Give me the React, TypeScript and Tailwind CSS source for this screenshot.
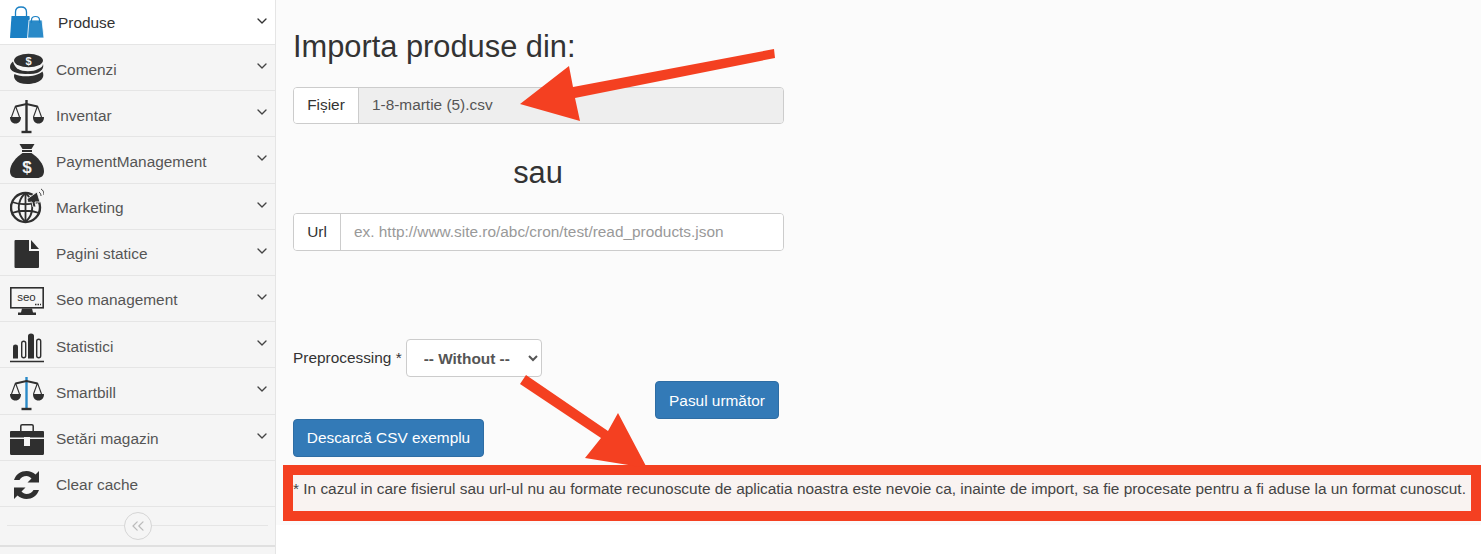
import React from 'react';
import { ChevronDown, ChevronsLeft } from 'lucide-react';

const dark = '#2f2f2f';
const blue = '#1b80c4';

const Icon = ({ children }: { children: React.ReactNode }) => (
    <svg width="34" height="40" viewBox="0 0 34 40" fill="none" className="shrink-0">
        {children}
    </svg>
);

const BagsIcon = () => (
    <Icon>
        <path d="M1.500 14h18l2 22H0z" fill={blue} />
        <path d="M5.500 15V10c0-3 2-5 5.500-5s5.500 2 5.500 5v5" stroke={blue} strokeWidth="1.300" />
        <path d="M19 18h13l2 18H17.500z" fill="#2a8ac8" stroke="#fff" strokeWidth=".8" />
        <path d="M21.500 21v-3c0-2 1.500-3.500 4-3.500s4 1.500 4 3.500v3" stroke={blue} strokeWidth="1.200" />
    </Icon>
);

const CoinsIcon = () => (
    <Icon>
        <ellipse cx="18.500" cy="12.500" rx="14.500" ry="6.800" fill={dark} />
        <text x="18.500" y="16.500" textAnchor="middle" fontSize="11" fontWeight="700" fill="#f3f3f3" fontFamily="Liberation Sans">$</text>
        <path d="M3 13.500C1 15 0 17 0 19c0 4 6 7 16 7 1 0 3 0 4-.3C12 25 5 21 3 13.500z" fill={dark} />
        <path d="M8 21c5 3 15 3 20 0 3-1 5-3 5-5 1 4-1 7-6 9-5 1.500-12 1-16-.5-2-1-3-2-3-3.500z" fill={dark} />
        <path d="M4.500 26c6 3 20 4 28-2.500 1.500 3 1 6-1 8-3 3-9 4.500-14 4.500-6 0-10-1.500-12-4-1.500-2-2-4-1-6z" fill={dark} />
    </Icon>
);

const ScaleIcon = ({ pole = dark }: { pole?: string }) => (
    <Icon>
        <path d="M16.500 6v31" stroke={pole} strokeWidth="2.400" />
        <path d="M11.500 38h10" stroke={dark} strokeWidth="2.400" />
        <path d="M5.500 12.500l11-2.500 11 2.500" stroke={dark} strokeWidth="2" />
        <path d="M5.500 12L1.500 23M5.500 12L9.500 23M27.500 12l-4 11M27.500 12l4 11" stroke={dark} strokeWidth="1.100" />
        <path d="M0 23h11c0 4-2 6.500-5.500 6.500S0 27 0 23zM23 23h11c0 4-2 6.500-5.500 6.500S23 27 23 23z" fill={dark} />
    </Icon>
);

const MoneyBagIcon = () => (
    <Icon>
        <path d="M9.500 4h15l-3 5h-9z" fill={dark} />
        <path d="M12 10h10v2H12z" fill={dark} />
        <path d="M12.500 13h9c6 4 12.500 11 12.500 18 0 5-3 7-7 7H7c-4 0-7-2-7-7 0-7 6.500-14 12.500-18z" fill={dark} />
        <text x="17" y="33" textAnchor="middle" fontSize="17" fontWeight="700" fill="#f3f3f3" fontFamily="Liberation Sans">$</text>
    </Icon>
);

const GlobeIcon = () => (
    <Icon>
        <circle cx="15.500" cy="21.500" r="14.500" stroke={dark} strokeWidth="2.400" />
        <path d="M15.500 7c-9 8-9 21 0 29M15.500 7c9 8 9 21 0 29" stroke={dark} strokeWidth="1.900" />
        <path d="M15.500 7v29M2 16c8 3 19 3 27 0M2 27c8-3 19-3 27 0" stroke={dark} strokeWidth="1.800" />
        <path d="M17 13l10-7 3 10-5 0 1 5h-3l-1-5-4 .5z" fill={dark} stroke="#f5f5f5" strokeWidth=".9" />
        <path d="M29 6c1.500 1 2 2.500 2 4M31 3c2 1 3 3 3 6" stroke={dark} strokeWidth=".9" />
    </Icon>
);

const FileIcon = () => (
    <Icon>
        <path d="M5.500 8H19v11h10v16a1 1 0 0 1-1 1H5.500a1 1 0 0 1-1-1V9a1 1 0 0 1 1-1z" fill={dark} />
        <path d="M21 8l8 9h-8z" fill={dark} />
    </Icon>
);

const SeoIcon = () => (
    <Icon>
        <rect x=".8" y="8.800" width="32.400" height="20" stroke={dark} strokeWidth="1.600" />
        <text x="16.500" y="22" textAnchor="middle" fontSize="11.500" fill={dark} fontFamily="Liberation Sans">seo</text>
        <path d="M25 25.500h6" stroke={dark} strokeWidth="1.300" strokeDasharray="1.500 1" />
        <path d="M12 29.500h10l1 4h3v2.500H8v-2.500h3z" fill={dark} />
    </Icon>
);

const BarsIcon = () => (
    <Icon>
        <path d="M3 33.500V21.500q0-2 2.500-2T8 21.500v12z" fill={dark} />
        <rect x="11.700" y="16.200" width="4" height="16.600" rx="2" stroke={dark} strokeWidth="1.400" />
        <path d="M18 33.500V11q0-2.500 3-2.500t3 2.500v22.500z" fill={dark} />
        <rect x="26.700" y="14.200" width="4" height="18.600" rx="2" stroke={dark} strokeWidth="1.400" />
        <path d="M0 36.500h34" stroke={dark} strokeWidth="1.600" />
    </Icon>
);

const CaseIcon = () => (
    <Icon>
        <path d="M10.800 14V9q0-1.300 1.300-1.300h9.800q1.300 0 1.300 1.300v5" stroke={dark} strokeWidth="1.500" />
        <path d="M1 14h32q1 0 1 1v5.500H20V20h-6v.5H0V15q0-1 1-1z" fill={dark} />
        <path d="M0 22h14v7h6v-7h14v14.500q0 1.500-1.500 1.500h-31Q0 38 0 36.500z" fill={dark} />
    </Icon>
);

const RefreshIcon = () => (
    <Icon>
        <path d="M4 17C6 11 11 8 16.500 8c3.500 0 6.500 1.300 9 3.500L29 8v11.500H17.500l4-4C20 14 18.500 13 16.500 13c-3 0-5.500 1.500-7 4z" fill={dark} />
        <path d="M29 27c-2 6-7 9-12.500 9-3.500 0-6.500-1.300-9-3.500L4 36V24.500h11.500l-4 4C13 30 14.500 31 16.500 31c3 0 5.500-1.500 7-4z" fill={dark} />
    </Icon>
);

interface MenuItem {
    label: string;
    icon: React.ReactNode;
    chevron?: boolean;
}

const menuItems: MenuItem[] = [
    { label: 'Comenzi', icon: <CoinsIcon />, chevron: true },
    { label: 'Inventar', icon: <ScaleIcon />, chevron: true },
    { label: 'PaymentManagement', icon: <MoneyBagIcon />, chevron: true },
    { label: 'Marketing', icon: <GlobeIcon />, chevron: true },
    { label: 'Pagini statice', icon: <FileIcon />, chevron: true },
    { label: 'Seo management', icon: <SeoIcon />, chevron: true },
    { label: 'Statistici', icon: <BarsIcon />, chevron: true },
    { label: 'Smartbill', icon: <ScaleIcon pole="#2a8ac8" />, chevron: true },
    { label: 'Setări magazin', icon: <CaseIcon />, chevron: true },
    { label: 'Clear cache', icon: <RefreshIcon /> },
];

const Sidebar = () => (
    <aside className="w-[276px] shrink-0 h-[554px] flex flex-col bg-[#f5f5f5] border-r border-[#e5e5e5] text-[15.400px] text-[#555]">
        <div className="h-[45px] shrink-0 flex items-center pl-[10px] pr-[5px] bg-white border-b border-[#e5e5e5] text-[#333]">
            <BagsIcon />
            <span className="ml-[14px] pt-[2px] flex-1">Produse</span>
            <ChevronDown size={16} strokeWidth={2} className="-mt-[3px]" />
        </div>
        {menuItems.map((item) => (
            <div key={item.label} className="h-[46.200px] shrink-0 flex items-center pl-[10px] pr-[5px] border-b border-[#e5e5e5]">
                {item.icon}
                <span className="ml-[12px] pt-[3px] flex-1">{item.label}</span>
                {item.chevron && <ChevronDown size={16} strokeWidth={2} className="-mt-[3px] text-[#444]" />}
            </div>
        ))}
        <div className="h-[40px] shrink-0 flex items-center px-[7px] border-b-2 border-[#e0e0e0]">
            <div className="flex-1 h-px bg-[#e5e5e5]" />
            <div className="w-[28px] h-[28px] rounded-full border border-[#d5d5d5] bg-[#f5f5f5] flex items-center justify-center text-[#bbb]">
                <ChevronsLeft size={20} strokeWidth={1.500} />
            </div>
            <div className="flex-1 h-px bg-[#e5e5e5]" />
        </div>
    </aside>
);

const ArrowOverlays = () => (
    <svg className="absolute left-0 top-0 pointer-events-none" width="1481" height="554" viewBox="0 0 1481 554">
        <path d="M774 49L775 58L575 98L580 121L520 104L569 66L573 87Z" fill="#f44021" />
        <path d="M526 375L520 384L601 438L585 458L647 468L618 413L608 431Z" fill="#f44021" />
    </svg>
);

const App = () => (
    <div className="relative flex w-[1481px] h-[554px] overflow-hidden bg-white font-['Liberation_Sans',sans-serif]">
        <Sidebar />
        <main className="flex-1 h-[525px] pl-[17px] bg-[#fbfbfb] text-[#333] text-[15.400px]">
            <div className="w-[491px]">
                <h1 className="pt-[30px] text-[30.800px] leading-[34px]">Importa produse din:</h1>
                <div className="mt-[23px] h-[37px] flex rounded border border-[#ccc] overflow-hidden">
                    <span className="w-[65px] pb-[1px] flex items-center justify-center bg-white border-r border-[#ccc]">Fișier</span>
                    <span className="flex-1 pb-[1px] flex items-center pl-[13px] bg-[#eee] text-[#555]">1-8-martie (5).csv</span>
                </div>
                <p className="mt-[32px] pr-[1px] text-center text-[30.800px] leading-[33px]">sau</p>
                <div className="mt-[24px] h-[38px] flex rounded border border-[#ccc] overflow-hidden">
                    <span className="w-[47px] flex items-center justify-center bg-white border-r border-[#ccc]">Url</span>
                    <input className="flex-1 pl-[13px] bg-white outline-none placeholder:text-[#999]" placeholder="ex. http://www.site.ro/abc/cron/test/read_products.json" />
                </div>
                <div className="mt-[88px] flex items-center gap-[4px]">
                    <label className="-mt-[1px]">Preprocessing *</label>
                    <select className="w-[136px] h-[38px] pl-[13px] rounded border border-[#ccc] bg-white font-bold text-[#555]">
                        <option>-- Without --</option>
                    </select>
                </div>
                <div className="mt-[4px] flex justify-end pr-[5px]">
                    <button className="w-[124px] h-[38px] pt-[1px] rounded border border-[#2e6da4] bg-[#337ab7] text-white">Pasul următor</button>
                </div>
                <button className="block w-[191px] h-[38px] rounded border border-[#2e6da4] bg-[#337ab7] text-white">Descarcă CSV exemplu</button>
            </div>
            <div className="-ml-[10px] mt-[8px] h-[56px] pb-[8px] flex items-center border-[10px] border-[#f44021] bg-[#f9f3f1] text-[#444] whitespace-nowrap">
                * In cazul in care fisierul sau url-ul nu au formate recunoscute de aplicatia noastra este nevoie ca, inainte de import, sa fie procesate pentru a fi aduse la un format cunoscut.
            </div>
        </main>
        <ArrowOverlays />
    </div>
);

export default App;
